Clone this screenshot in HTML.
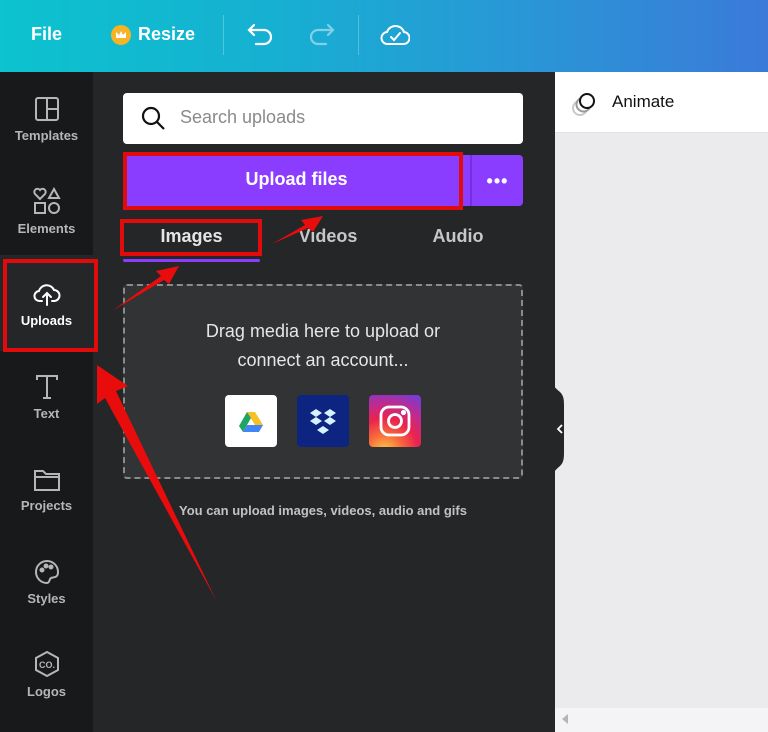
<!DOCTYPE html>
<html><head><meta charset="utf-8"><style>
*{margin:0;padding:0;box-sizing:border-box}
body{width:768px;height:732px;overflow:hidden;background:#252627;font-family:"Liberation Sans",sans-serif;position:relative}
.abs{position:absolute}
.top{left:0;top:0;width:768px;height:72px;background:linear-gradient(90deg,#0cc3ce 0%,#16b0d2 35%,#2a95d6 70%,#3b7ad9 100%)}
.top span{position:absolute;color:#fff;font-weight:bold;font-size:18px;top:24px}
.side{left:0;top:72px;width:93px;height:660px;background:#18191b}
.item{position:absolute;left:0;width:93px;text-align:center;color:#b5b6b8;font-size:13px;font-weight:bold}
.item svg{display:block;margin:0 auto 6px}
.panel{left:93px;top:72px;width:462px;height:660px;background:#252627}
.canvas{left:555px;top:72px;width:213px;height:660px;background:#ebebee}
.red{position:absolute;border:4px solid #e10b0b}
</style></head><body>
<div class="abs top">
<span style="left:31px">File</span>
<div class="abs" style="left:111px;top:25px;width:20px;height:20px;border-radius:50%;background:#f5b325"><svg width="20" height="20"><path d="M5 13 L5 7 L8 10 L10 6 L12 10 L15 7 L15 13Z" fill="#fff"/></svg></div>
<span style="left:138px">Resize</span>
<div class="abs" style="left:223px;top:15px;width:1px;height:40px;background:rgba(255,255,255,.25)"></div>
<div class="abs" style="left:358px;top:15px;width:1px;height:40px;background:rgba(255,255,255,.25)"></div>
<svg class="abs" style="left:247px;top:22px" width="28" height="26" fill="none" stroke="#fff" stroke-width="2.2" stroke-linecap="round"><path d="M7 3 L2 8 L7 13 M2 8 H17 A7 7 0 0 1 17 22 H9"/></svg>
<svg class="abs" style="left:307px;top:22px" width="28" height="26" fill="none" stroke="rgba(255,255,255,.45)" stroke-width="2.2" stroke-linecap="round"><path d="M21 3 L26 8 L21 13 M26 8 H11 A7 7 0 0 0 11 22 H19"/></svg>
<svg class="abs" style="left:380px;top:22px" width="30" height="26" fill="none" stroke="#fff" stroke-width="2" stroke-linecap="round"><path d="M8 22 A6 6 0 0 1 7 10 A9 9 0 0 1 24 10 A6 6 0 0 1 23 22 Z"/><path d="M11 15 L14 18 L20 11"/></svg>
</div>
<div class="abs side">
<div class="abs" style="left:0;top:183px;width:93px;height:96px;background:#252627"></div>
<div class="item" style="top:24px"><svg width="26" height="26" fill="none" stroke="#b5b6b8" stroke-width="2"><rect x="2" y="2" width="22" height="22" rx="2"/><path d="M13 2V24M13 13H24"/></svg>Templates</div>
<div class="item" style="top:115px"><svg width="28" height="28" fill="none" stroke="#b5b6b8" stroke-width="2"><path d="M7 12 L2 7 A3 3 0 0 1 7 3 A3 3 0 0 1 12 7Z"/><path d="M21 2 L26 11 H16Z"/><rect x="2" y="16" width="10" height="10"/><circle cx="21" cy="21" r="5"/></svg>Elements</div>
<div class="item" style="top:209px;color:#fff"><svg width="28" height="26" fill="none" stroke="#fff" stroke-width="2" stroke-linecap="round"><path d="M9 20 H7 A5 5 0 0 1 6 10 A8 8 0 0 1 21 9 A5.5 5.5 0 0 1 21 20 H19"/><path d="M14 24 V12 M10 16 L14 12 L18 16"/></svg>Uploads</div>
<div class="item" style="top:302px"><svg width="26" height="26" fill="none" stroke="#b5b6b8" stroke-width="2"><path d="M3 6V2H23V6M13 2V24M9 24H17"/></svg>Text</div>
<div class="item" style="top:396px"><svg width="28" height="24" fill="none" stroke="#b5b6b8" stroke-width="2"><path d="M2 3H10L13 6H26V22H2Z M2 9H26"/></svg>Projects</div>
<div class="item" style="top:487px"><svg width="26" height="26" fill="none" stroke="#b5b6b8" stroke-width="2"><path d="M13 2 A11 11 0 0 0 13 24 C16 24 15 20 17 19 C20 18 24 19 24 13 A11 11 0 0 0 13 2Z"/><circle cx="8" cy="11" r="1.5" fill="#b5b6b8"/><circle cx="12" cy="7" r="1.5" fill="#b5b6b8"/><circle cx="17" cy="8" r="1.5" fill="#b5b6b8"/></svg>Styles</div>
<div class="item" style="top:578px"><svg width="26" height="28" fill="none" stroke="#b5b6b8" stroke-width="2"><path d="M13 2 L24 8 V20 L13 26 L2 20 V8Z"/><text x="13" y="18" font-size="9" font-weight="bold" text-anchor="middle" fill="#b5b6b8" stroke="none" font-family="Liberation Sans">CO.</text></svg>Logos</div>
</div>
<div class="abs panel">
<div class="abs" style="left:30px;top:21px;width:400px;height:51px;background:#fff;border-radius:4px">
<svg class="abs" style="left:18px;top:13px" width="26" height="26" fill="none" stroke="#111" stroke-width="2.2"><circle cx="10" cy="10" r="8"/><path d="M16 16 L23 23"/></svg>
<span class="abs" style="left:57px;top:14px;font-size:18px;color:#8a8a8d">Search uploads</span></div>
<div class="abs" style="left:30px;top:83px;width:400px;height:51px;background:#8b3dff;border-radius:4px"></div>
<div class="abs" style="left:377px;top:83px;width:2px;height:51px;background:#7430e0"></div>
<div class="abs" style="left:30px;top:97px;width:347px;text-align:center;color:#fff;font-weight:bold;font-size:18px">Upload files</div>
<div class="abs" style="left:379px;top:99px;width:51px;text-align:center;color:#fff;font-weight:bold;font-size:18px;letter-spacing:1px">•••</div>
<div class="abs" style="left:30px;top:154px;width:137px;text-align:center;color:#e5e5e6;font-weight:bold;font-size:18px">Images</div>
<div class="abs" style="left:185px;top:154px;width:100px;text-align:center;color:#c7c7c9;font-weight:bold;font-size:18px">Videos</div>
<div class="abs" style="left:315px;top:154px;width:100px;text-align:center;color:#c7c7c9;font-weight:bold;font-size:18px">Audio</div>
<div class="abs" style="left:30px;top:187px;width:137px;height:3px;background:#8b3dff;border-radius:2px"></div>
<div class="abs" style="left:30px;top:212px;width:400px;height:195px;background:#323334;border:2px dashed #8b8b8d;border-radius:4px"></div>
<div class="abs" style="left:30px;top:245px;width:400px;text-align:center;color:#e6e6e7;font-size:18px;line-height:29px">Drag media here to upload or<br>connect an account...</div>
<div class="abs" style="left:132px;top:323px;width:52px;height:52px;background:#fff;border-radius:4px"><svg width="52" height="52"><path d="M22 17 H30 L38 30 H30Z" fill="#f6c026"/><path d="M22 17 L14 31 L18 37 L26 23Z" fill="#1fa463"/><path d="M18 37 H34 L38 30 H22Z" fill="#4285f4"/></svg></div>
<div class="abs" style="left:204px;top:323px;width:52px;height:52px;background:#0d2481;border-radius:4px"><svg width="52" height="52" fill="#d6f2ff"><path d="M19 14 L25 18 L19 22 L13 18Z M33 14 L39 18 L33 22 L27 18Z M19 22 L25 26 L19 30 L13 26Z M33 22 L39 26 L33 30 L27 26Z M26 31 L32 35 L26 39 L20 35Z"/></svg></div>
<div class="abs" style="left:276px;top:323px;width:52px;height:52px;border-radius:4px;background:radial-gradient(circle at 30% 110%,#fdd44c 0%,#f9703a 25%,#e9234e 50%,#c22a8c 70%,#6a3ee0 100%)"><svg width="52" height="52" fill="none" stroke="#fff" stroke-width="2.8"><rect x="12" y="12" width="28" height="28" rx="8"/><circle cx="26" cy="26" r="6.5"/><circle cx="34.5" cy="17.5" r="1.2" fill="#fff"/></svg></div>
<div class="abs" style="left:30px;top:431px;width:400px;text-align:center;color:#c2c2c4;font-size:13px;font-weight:bold">You can upload images, videos, audio and gifs</div>
</div>
<div class="abs canvas">
<div class="abs" style="left:0;top:0;width:213px;height:61px;background:#fff;border-bottom:1px solid #e3e3e6"></div>
<svg class="abs" style="left:16px;top:17px" width="30" height="30" fill="none" stroke-width="2"><circle cx="9" cy="19" r="7" stroke="#c9c9c9"/><circle cx="12.5" cy="15.5" r="7" stroke="#9a9a9a" fill="#fff"/><circle cx="16" cy="12" r="7" stroke="#111" fill="#fff"/></svg>
<span class="abs" style="left:57px;top:20px;font-size:17px;color:#111">Animate</span>
<div class="abs" style="left:0;top:636px;width:213px;height:24px;background:#f4f4f6"></div>
<svg class="abs" style="left:5px;top:641px" width="10" height="12"><path d="M8 1 L2 6 L8 11Z" fill="#b5b5b8"/></svg>
</div>
<svg class="abs" style="left:548px;top:378px" width="24" height="104"><path d="M0 0 C4 6 7 10 12 14 C16 18 16 22 16 30 V72 C16 80 16 84 12 88 C7 92 4 96 0 104Z" fill="#252627"/><path d="M14 47 L10 51 L14 55" fill="none" stroke="#fff" stroke-width="1.8"/></svg>
<div class="red" style="left:123px;top:152px;width:340px;height:58px"></div>
<div class="red" style="left:120px;top:219px;width:142px;height:37px"></div>
<div class="red" style="left:3px;top:259px;width:95px;height:93px"></div>
<svg class="abs" style="left:0;top:0" width="768" height="732"><g fill="#e80c0c"><polygon points="97,365 128,386 116,391 216,600 105,398 97,404"/><polygon points="179,266 169,284 164,280 112,311 161,276 156,271"/><polygon points="323,216 313,232 308,228 272,244 305,225 301,220"/></g></svg>
</body></html>
